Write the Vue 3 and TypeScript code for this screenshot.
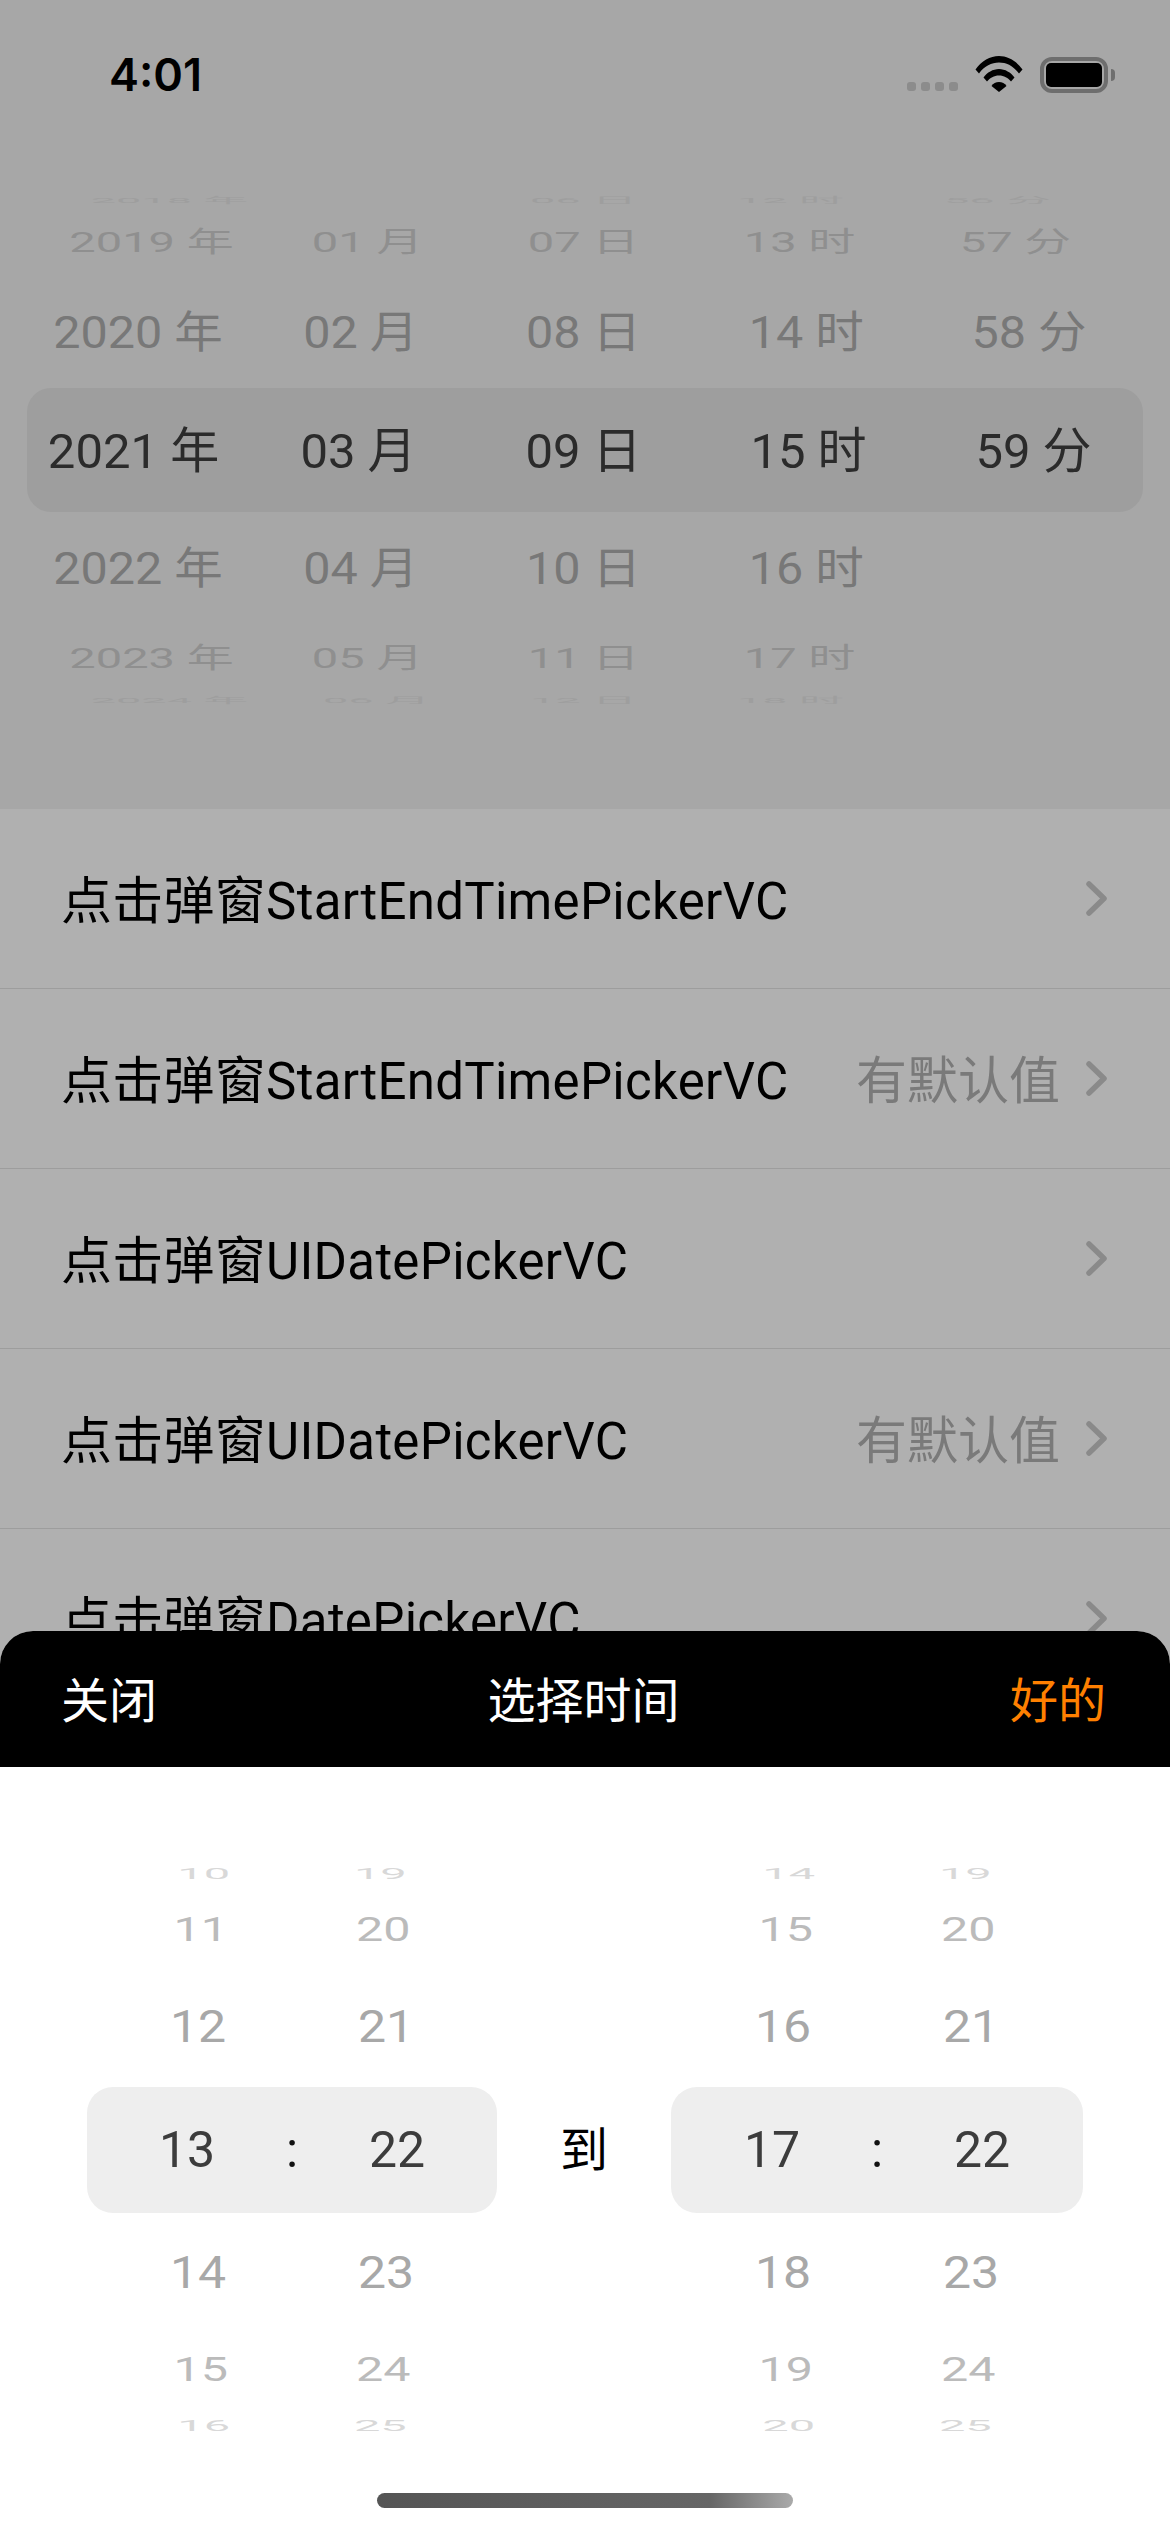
<template>
  <div class="screen">
    <section class="top">
      <div class="status">
        <span class="time">4:01</span>
        <div class="status-icons">
          <div class="signal"><i v-for="n in 4" :key="n"></i></div>
          <svg class="wifi" width="48" height="36" viewBox="0 0 48 36">
            <path d="M0.5 13.5C6.5 5 15 0 24 0C33 0 41.5 5 47.5 13.5L44 17.5C38.5 10 31.5 6.5 24 6.5C16.5 6.5 9.5 10 4 17.5Z" />
            <path d="M8.5 21.5C12 16.5 18 13 24 13C30 13 36 16.5 39.5 21.5L36 25.5C33 22 29 19.5 24 19.5C19 19.5 15 22 12 25.5Z" />
            <path d="M16.5 30C18 27.5 21 26 24 26C27 26 30 27.5 31.5 30L24 36Z" />
          </svg>
          <div class="battery"><div class="battery-fill"></div></div>
          <div class="battery-nub"></div>
        </div>
      </div>
      <div class="date-wheel">
        <div v-for="row in dateRows" :key="row.cls" class="date-row" :class="row.cls">
          <div class="date-cols">
            <span v-for="(cell, i) in row.cells" :key="i">{{ cell }}</span>
          </div>
        </div>
      </div>
    </section>

    <section class="list">
      <div v-for="(item, i) in items" :key="i" class="list-row">
        <span class="list-title">点击弹窗{{ item.name }}</span>
        <span v-if="item.value" class="list-value">{{ item.value }}</span>
        <svg class="chevron" width="21" height="35" viewBox="0 0 21 35">
          <path d="M3 3L18 17.5L3 32" />
        </svg>
      </div>
    </section>

    <section class="sheet">
      <header class="sheet-head">
        <span>关闭</span>
        <span>选择时间</span>
        <span class="ok">好的</span>
      </header>
      <div class="time-range">
        <div v-for="wheel in timeWheels" :key="wheel.sel[0]" class="time-wheel">
          <div v-for="row in wheel.before" :key="row.cls" class="time-row" :class="row.cls">
            <div class="time-cols"><span>{{ row.cells[0] }}</span><span>{{ row.cells[1] }}</span></div>
          </div>
          <div class="time-sel">
            <span>{{ wheel.sel[0] }}</span>
            <span class="colon">:</span>
            <span>{{ wheel.sel[1] }}</span>
          </div>
          <div v-for="row in wheel.after" :key="row.cls" class="time-row" :class="row.cls">
            <div class="time-cols"><span>{{ row.cells[0] }}</span><span>{{ row.cells[1] }}</span></div>
          </div>
        </div>
        <div class="to">到</div>
      </div>
      <div class="home-bar"></div>
    </section>
  </div>
</template>

<script setup lang="ts">
type Row = { cls: string; cells: string[] }

const dateRows: Row[] = [
  { cls: 'd3', cells: ['2018 年', '', '06 日', '12 时', '56 分'] },
  { cls: 'd2', cells: ['2019 年', '01 月', '07 日', '13 时', '57 分'] },
  { cls: 'd1', cells: ['2020 年', '02 月', '08 日', '14 时', '58 分'] },
  { cls: 'd0', cells: ['2021 年', '03 月', '09 日', '15 时', '59 分'] },
  { cls: 'd1 below', cells: ['2022 年', '04 月', '10 日', '16 时', ''] },
  { cls: 'd2 below', cells: ['2023 年', '05 月', '11 日', '17 时', ''] },
  { cls: 'd3 below', cells: ['2024 年', '06 月', '12 日', '18 时', ''] },
]

const items = [
  { name: 'StartEndTimePickerVC', value: '' },
  { name: 'StartEndTimePickerVC', value: '有默认值' },
  { name: 'UIDatePickerVC', value: '' },
  { name: 'UIDatePickerVC', value: '有默认值' },
  { name: 'DatePickerVC', value: '' },
]

function makeWheel(hour: number, minute: number) {
  const cell = (h: number, m: number) => [String(hour + h), String(minute + m)]
  return {
    sel: [String(hour), String(minute)],
    before: [
      { cls: 't3', cells: cell(-3, -3) },
      { cls: 't2', cells: cell(-2, -2) },
      { cls: 't1', cells: cell(-1, -1) },
    ],
    after: [
      { cls: 't1', cells: cell(1, 1) },
      { cls: 't2', cells: cell(2, 2) },
      { cls: 't3', cells: cell(3, 3) },
      { cls: 't4', cells: cell(4, 4) },
    ],
  }
}

const timeWheels = [makeWheel(13, 22), makeWheel(17, 22)]
</script>

<style>
body {
  margin: 0;
}
</style>

<style scoped>
.screen {
  width: 1170px;
  height: 2532px;
  display: flex;
  flex-direction: column;
  overflow: hidden;
  background: #b0b0b0;
  font-family: Roboto, "Noto Sans CJK SC", sans-serif;
}
.top {
  height: 809px;
  flex: none;
  background: #a7a7a7;
}
.status {
  height: 148px;
  padding: 0 55px 0 109px;
  display: flex;
  justify-content: space-between;
  align-items: center;
}
.time {
  font-family: Inter, sans-serif;
  font-size: 45px;
  font-weight: 600;
  color: #000;
}
.status-icons {
  display: flex;
  align-items: flex-end;
}
.signal {
  display: flex;
  gap: 5px;
  margin-right: 17px;
  margin-bottom: 1px;
}
.signal i {
  width: 9px;
  height: 9px;
  border-radius: 3px;
  background: #8c8c8c;
}
.wifi {
  display: block;
  margin-right: 17px;
  fill: #000;
}
.battery {
  width: 68px;
  height: 36px;
  box-sizing: border-box;
  padding: 2px;
  border: 4px solid #6e6e6e;
  border-radius: 12px;
  margin-bottom: -1px;
}
.battery-fill {
  height: 100%;
  background: #000;
  border-radius: 5px;
}
.battery-nub {
  width: 4px;
  height: 12px;
  margin: 0 0 11px 3px;
  background: #6e6e6e;
  border-radius: 0 6px 6px 0;
}
.date-wheel {
  margin-top: 44px;
  padding: 0 27px;
}
.date-row {
  display: flex;
  align-items: center;
}
.date-cols {
  flex: 1;
  margin: 0 -3px 0 -6px;
  padding-top: 4px;
  display: grid;
  grid-template-columns: repeat(5, 1fr);
  text-align: center;
  font-size: 49px;
  line-height: 60px;
  white-space: nowrap;
}
.d0 {
  height: 124px;
  background: #9e9e9e;
  border-radius: 24px;
  color: #2b2b2b;
}
.d1 {
  height: 112px;
  color: #787878;
}
.d1 .date-cols {
  transform: scale(0.99, 0.9);
}
.d2 {
  height: 68px;
  color: #8f8f8f;
}
.d2 .date-cols {
  transform: scale(0.96, 0.57);
}
.d3 {
  height: 16px;
  overflow: hidden;
  color: #9e9e9e;
}
.d3 .date-cols {
  transform: scale(0.92, 0.16);
}
.list {
  flex: 1;
  min-height: 0;
  overflow: hidden;
}
.list-row {
  height: 180px;
  box-sizing: border-box;
  padding: 0 63px 0 61px;
  display: flex;
  align-items: center;
  border-bottom: 1px solid #9d9d9d;
  font-size: 51px;
}
.list-title {
  flex: 1;
  margin-bottom: 3px;
  letter-spacing: 0.28px;
  color: #000;
}
.list-value {
  color: #7a7a7a;
  margin-right: 26px;
  margin-bottom: 3px;
}
.chevron {
  display: block;
  fill: none;
  stroke: #8a8a8a;
  stroke-width: 5.5;
  stroke-linecap: round;
  stroke-linejoin: round;
}
.sheet {
  height: 901px;
  flex: none;
  display: flex;
  flex-direction: column;
  background: #fff;
  border-radius: 33px 33px 0 0;
  overflow: hidden;
}
.sheet-head {
  height: 136px;
  flex: none;
  box-sizing: border-box;
  padding: 0 64px 4px 61px;
  display: flex;
  justify-content: space-between;
  align-items: center;
  background: #000;
  color: #fff;
  font-size: 48px;
}
.ok {
  color: #ff8000;
}
.time-range {
  margin-top: 100px;
  padding-left: 87px;
  height: 570px;
  display: grid;
  grid-template-columns: 410px 174px 412px;
  overflow: hidden;
}
.to {
  grid-column: 2;
  grid-row: 1;
  margin-top: 254px;
  text-align: center;
  font-size: 48px;
  line-height: 60px;
  color: #000;
}
.time-wheel:last-of-type {
  grid-column: 3;
}
.time-wheel {
  grid-row: 1;
  margin-top: -12px;
}
.time-row {
  display: flex;
  align-items: center;
  justify-content: center;
}
.time-cols {
  display: grid;
  grid-template-columns: 188px 188px;
  text-align: center;
  font-size: 50px;
  line-height: 60px;
}
.time-sel {
  height: 126px;
  display: grid;
  grid-template-columns: repeat(3, 105px);
  justify-content: center;
  align-items: center;
  text-align: center;
  background: #eee;
  border-radius: 26px;
  font-size: 50px;
  color: #3c3c3c;
}
.colon {
  color: #111;
}
.t1 {
  height: 120px;
  color: #a8a8a8;
}
.t1 .time-cols {
  transform: scaleY(0.88);
}
.t2 {
  height: 74px;
  color: #bbb;
}
.t2 .time-cols {
  transform: scale(0.97, 0.65);
}
.t3 {
  height: 38px;
  color: #d8d8d8;
}
.t3 .time-cols {
  transform: scale(0.94, 0.28);
}
.t4 {
  height: 16px;
  margin-top: -14px;
  color: #e2e2e2;
}
.t4 .time-cols {
  transform: scale(0.92, 0.16);
}
.home-bar {
  width: 416px;
  height: 15px;
  margin: 56px auto 0;
  border-radius: 8px;
  background: linear-gradient(90deg, #555 0%, #666 80%, #aaa 100%);
}
</style>
